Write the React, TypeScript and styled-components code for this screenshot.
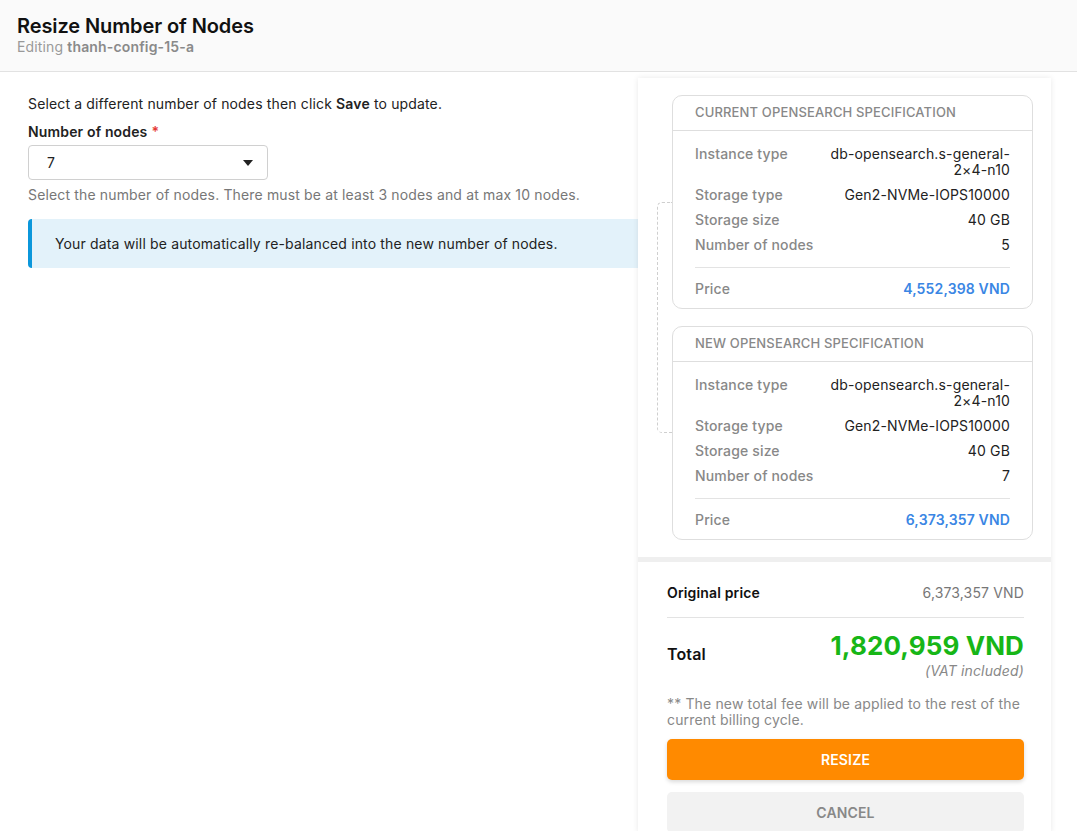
import React from "react";
import styled, { createGlobalStyle } from "styled-components";

const Global = createGlobalStyle`
  html, body { margin: 0; padding: 0; background: #fff; }
  body { font-family: Inter, "Noto Sans", sans-serif; color: #222; overflow: hidden; }
  * { box-sizing: border-box; }
`;

const Page = styled.div`
  width: 1077px;
  height: 831px;
  overflow: hidden;
  display: flex;
  flex-direction: column;
`;

const Header = styled.header`
  background: #fafafa;
  border-bottom: 1px solid #e2e2e2;
  padding: 14px 17px 16px;
  flex: none;
`;

const Title = styled.h1`
  margin: 0;
  font-size: 20px;
  line-height: 24px;
  font-weight: 600;
  color: #111;
  letter-spacing: -0.1px;
`;

const Subtitle = styled.div`
  font-size: 14px;
  line-height: 17px;
  color: #999;
  letter-spacing: 0.15px;
  b { font-weight: 600; color: #8a8a8a; }
`;

const Body = styled.div`
  display: flex;
  align-items: flex-start;
  flex: 1;
`;

const LeftCol = styled.div`
  width: 610px;
  margin-left: 28px;
  padding-top: 23px;
  display: flex;
  flex-direction: column;
  font-size: 14px;
  line-height: 17px;
  letter-spacing: 0.15px;
`;

const Intro = styled.p`
  margin: 0;
  color: #222;
  b { font-weight: 600; }
`;

const Label = styled.label`
  margin-top: 11px;
  font-weight: 600;
  color: #222;
  span { color: #e53935; margin-left: 4px; }
`;

const Select = styled.div`
  margin-top: 5px;
  width: 240px;
  height: 35px;
  border: 1px solid #d0d0d0;
  border-radius: 4px;
  display: flex;
  align-items: center;
  justify-content: space-between;
  padding: 0 14px 0 18px;
  font-size: 14px;
  color: #222;
`;

const Caret = styled.span`
  width: 0;
  height: 0;
  border-left: 5.5px solid transparent;
  border-right: 5.5px solid transparent;
  border-top: 6px solid #222;
`;

const Helper = styled.p`
  margin: 6px 0 0;
  color: #777;
`;

const Info = styled.div`
  margin-top: 16px;
  height: 49px;
  background: #e3f2fa;
  border-left: 4px solid #0b97db;
  border-radius: 4px 0 0 4px;
  display: flex;
  align-items: center;
  padding-left: 23px;
  color: #222;
`;

const Panel = styled.aside`
  width: 413px;
  margin-top: 6px;
  background: #fff;
  box-shadow: 0 0 6px rgba(0, 0, 0, 0.09);
  display: flex;
  flex-direction: column;
  font-size: 14px;
  line-height: 17px;
  letter-spacing: 0.15px;
`;

const Specs = styled.div`
  position: relative;
  padding: 17px 18px 17px 34px;
  display: flex;
  flex-direction: column;
  gap: 17px;
`;

const Connector = styled.div`
  position: absolute;
  left: 19px;
  top: 124px;
  width: 15px;
  height: 231px;
  border: 1px dashed #cfcfcf;
  border-right: none;
  border-radius: 5px 0 0 5px;
`;

const Card = styled.div`
  position: relative;
  background: #fff;
  border: 1px solid #dedede;
  border-radius: 10px;
`;

const CardHead = styled.div`
  padding: 8px 22px 9px;
  border-bottom: 1px solid #dedede;
  color: #888;
  font-size: 13px;
  font-weight: 500;
  text-transform: uppercase;
`;

const CardBody = styled.div`
  padding: 14px 22px 0;
  display: flex;
  flex-direction: column;
  gap: 8px;
`;

const Row = styled.div`
  display: flex;
  justify-content: space-between;
  align-items: flex-start;
`;

const Key = styled.span`
  color: #888;
  font-weight: 500;
  white-space: nowrap;
`;

const Val = styled.span`
  color: #222;
  text-align: right;
  line-height: 16px;
  padding-top: 1px;
  max-width: 184px;
`;

const PriceRow = styled.div`
  margin: 14px 22px 0;
  border-top: 1px solid #e3e3e3;
  padding: 12px 0 11px;
  display: flex;
  justify-content: space-between;
`;

const PriceVal = styled.span`
  color: #3a86e4;
  font-weight: 600;
`;

const Summary = styled.div`
  border-top: 5px solid #efefef;
  padding: 22px 27px 0 29px;
  display: flex;
  flex-direction: column;
`;

const SumRow = styled.div`
  display: flex;
  justify-content: space-between;
  align-items: center;
  padding-bottom: 16px;
  border-bottom: 1px solid #e3e3e3;
`;

const SumLabel = styled.span<{ $big?: boolean }>`
  font-weight: 600;
  color: #111;
  font-size: ${(p) => (p.$big ? "16px" : "14px")};
`;

const SumVal = styled.span`
  color: #777;
`;

const TotalRow = styled.div`
  display: flex;
  justify-content: space-between;
  align-items: center;
  padding-top: 11px;
`;

const TotalBlock = styled.div`
  display: flex;
  flex-direction: column;
  align-items: flex-end;
`;

const TotalVal = styled.span`
  font-size: 26px;
  line-height: 33px;
  font-weight: 700;
  letter-spacing: 0.1px;
  color: #17b617;
`;

const Vat = styled.span`
  font-style: italic;
  color: #888;
`;

const Note = styled.p`
  margin: 17px 0 0;
  line-height: 16px;
  color: #888;
`;

const Button = styled.button<{ $primary?: boolean }>`
  margin-top: ${(p) => (p.$primary ? "11px" : "12px")};
  height: 41px;
  border: none;
  border-radius: 5px;
  font-family: inherit;
  font-size: 14px;
  font-weight: 600;
  letter-spacing: 0.15px;
  background: ${(p) => (p.$primary ? "#ff8a00" : "#f2f2f2")};
  color: ${(p) => (p.$primary ? "#fff" : "#888")};
  box-shadow: ${(p) => (p.$primary ? "0 2px 4px rgba(0,0,0,0.15)" : "none")};
`;

type Spec = { title: string; nodes: string; price: string };

const specs: Spec[] = [
  { title: "Current OpenSearch Specification", nodes: "5", price: "4,552,398 VND" },
  { title: "New OpenSearch Specification", nodes: "7", price: "6,373,357 VND" },
];

function SpecCard({ spec }: { spec: Spec }) {
  return (
    <Card>
      <CardHead>{spec.title}</CardHead>
      <CardBody>
        <Row>
          <Key>Instance type</Key>
          <Val>db-opensearch.s-general-2×4-n10</Val>
        </Row>
        <Row>
          <Key>Storage type</Key>
          <Val>Gen2-NVMe-IOPS10000</Val>
        </Row>
        <Row>
          <Key>Storage size</Key>
          <Val>40 GB</Val>
        </Row>
        <Row>
          <Key>Number of nodes</Key>
          <Val>{spec.nodes}</Val>
        </Row>
      </CardBody>
      <PriceRow>
        <Key>Price</Key>
        <PriceVal>{spec.price}</PriceVal>
      </PriceRow>
    </Card>
  );
}

export default function App() {
  return (
    <Page>
      <Global />
      <Header>
        <Title>Resize Number of Nodes</Title>
        <Subtitle>
          Editing <b>thanh-config-15-a</b>
        </Subtitle>
      </Header>
      <Body>
        <LeftCol>
          <Intro>
            Select a different number of nodes then click <b>Save</b> to update.
          </Intro>
          <Label>
            Number of nodes<span>*</span>
          </Label>
          <Select>
            <span>7</span>
            <Caret />
          </Select>
          <Helper>
            Select the number of nodes. There must be at least 3 nodes and at max 10 nodes.
          </Helper>
          <Info>Your data will be automatically re-balanced into the new number of nodes.</Info>
        </LeftCol>
        <Panel>
          <Specs>
            <Connector />
            {specs.map((s) => (
              <SpecCard key={s.title} spec={s} />
            ))}
          </Specs>
          <Summary>
            <SumRow>
              <SumLabel>Original price</SumLabel>
              <SumVal>6,373,357 VND</SumVal>
            </SumRow>
            <TotalRow>
              <SumLabel $big>Total</SumLabel>
              <TotalBlock>
                <TotalVal>1,820,959 VND</TotalVal>
                <Vat>(VAT included)</Vat>
              </TotalBlock>
            </TotalRow>
            <Note>** The new total fee will be applied to the rest of the current billing cycle.</Note>
            <Button $primary>RESIZE</Button>
            <Button>CANCEL</Button>
          </Summary>
        </Panel>
      </Body>
    </Page>
  );
}
